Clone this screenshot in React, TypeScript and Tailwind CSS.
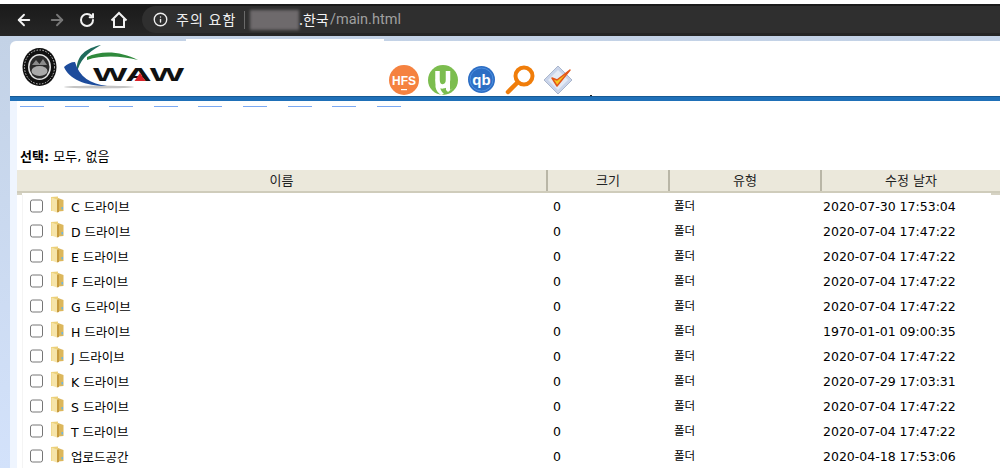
import { ArrowLeft, ArrowRight, Info, RotateCw } from "lucide-react";

const rows = [
  { name: "C 드라이브", date: "2020-07-30 17:53:04" },
  { name: "D 드라이브", date: "2020-07-04 17:47:22" },
  { name: "E 드라이브", date: "2020-07-04 17:47:22" },
  { name: "F 드라이브", date: "2020-07-04 17:47:22" },
  { name: "G 드라이브", date: "2020-07-04 17:47:22" },
  { name: "H 드라이브", date: "1970-01-01 09:00:35" },
  { name: "J 드라이브", date: "2020-07-04 17:47:22" },
  { name: "K 드라이브", date: "2020-07-29 17:03:31" },
  { name: "S 드라이브", date: "2020-07-04 17:47:22" },
  { name: "T 드라이브", date: "2020-07-04 17:47:22" },
  { name: "업로드공간", date: "2020-04-18 17:53:06" },
];

const uiFont = "font-['DejaVu_Sans','Noto_Sans_CJK_KR',sans-serif]";

const FolderIcon = () => (
  <svg width="14" height="17" viewBox="0 0 14 17" className="shrink-0">
    <path d="M1 1 L8 0.5 L8 14.5 L1 15 Z" fill="#ecd07a" />
    <path d="M8 2 L13.5 4 L13.5 15 L8 15.5 Z" fill="#dcb75c" />
    <path d="M1.5 1.5 L7 3.5 L7 16.5 L1.5 14.5 Z" fill="#f6e4a8" />
    <path d="M7 3.5 L9 4 L9 16 L7 16.5 Z" fill="#c79b3e" />
    <rect x="11.5" y="11" width="1.5" height="2.5" fill="#6db5e0" />
  </svg>
);

const Seal = () => (
  <svg width="35" height="38" viewBox="0 0 35 38" className="shrink-0">
    <ellipse cx="17.5" cy="19" rx="17" ry="19" fill="#111" />
    <ellipse cx="17.5" cy="19" rx="15" ry="17" fill="none" stroke="#ccc" strokeWidth="1" strokeDasharray="1.5 1.5" />
    <ellipse cx="17.5" cy="19" rx="11.5" ry="13" fill="#e4e4e4" />
    <ellipse cx="17.5" cy="19" rx="10" ry="11.5" fill="#2a2a2a" />
    <ellipse cx="17.5" cy="23" rx="8" ry="5" fill="#aaa" />
    <path d="M10 17 L14 12 L17.5 16 L21 11 L25 17 Z" fill="#8a8a8a" />
  </svg>
);

const WawLogo = () => (
  <svg width="124" height="46" viewBox="0 0 124 46" className="shrink-0">
    <ellipse cx="36" cy="42" rx="35" ry="1.4" fill="#c4c4c4" />
    <path d="M38 0 C24 3 12 10 14 28 C16 16 24 8 38 0 Z" fill="#1f6b5c" />
    <path d="M24 12 C38 5 58 6 75 15 C58 11 40 10 24 15 Z" fill="#2f8a3c" />
    <path d="M1 22 C6 34 22 41 44 41 C28 39 16 32 12 17 C8 17 4 19 1 22 Z" fill="#1d4c9c" />
    <text
      x="75.5"
      y="36"
      textAnchor="middle"
      textLength="91"
      lengthAdjust="spacingAndGlyphs"
      fontFamily="Liberation Sans, sans-serif"
      fontWeight="700"
      fontSize="19"
      fill="#111"
    >
      WAW
    </text>
    <path d="M77 28 L82.5 36 L71.5 36 Z" fill="#d8232a" />
  </svg>
);

const HfsIcon = () => (
  <svg width="30" height="30" viewBox="0 0 30 30">
    <circle cx="15" cy="15" r="15" fill="#f58240" />
    <text x="15" y="20" textAnchor="middle" fontFamily="Liberation Sans, sans-serif" fontWeight="700" fontSize="12" fill="#fff">
      HFS
    </text>
    <rect x="12" y="24" width="6" height="1.2" fill="#fff" />
  </svg>
);

const TorrentIcon = () => (
  <svg width="30" height="30" viewBox="0 0 30 30">
    <circle cx="15" cy="15" r="15" fill="#7cbd4f" />
    <path d="M9.5 6 V15 C9.5 24 20 23 20 15 V6" fill="none" stroke="#fff" strokeWidth="4.5" />
    <path d="M7.5 14 L7.5 22 C8 25 10 28 13 30 L16 29 C13 26 12 24 12 20 Z" fill="#fff" />
    <path d="M18 14 H22 V25 L25 23 L20 27 L18 25 Z" fill="#fff" />
  </svg>
);

const QbIcon = () => (
  <svg width="27" height="27" viewBox="0 0 27 27">
    <circle cx="13.5" cy="13.5" r="13.5" fill="#2d6ec4" />
    <circle cx="13.5" cy="13.5" r="11.5" fill="none" stroke="#4d8fe0" strokeWidth="1" />
    <text x="13.5" y="18.5" textAnchor="middle" fontFamily="Liberation Sans, sans-serif" fontWeight="700" fontSize="15" fill="#fff">
      qb
    </text>
  </svg>
);

const SearchIcon = () => (
  <svg width="30" height="30" viewBox="0 0 30 30">
    <circle cx="19" cy="11" r="8.5" fill="#fff" stroke="#f07d0a" strokeWidth="4" />
    <path d="M12.5 17.5 L3 27" stroke="#f07d0a" strokeWidth="4.5" strokeLinecap="round" />
  </svg>
);

const CheckIcon = () => (
  <svg width="30" height="30" viewBox="0 0 30 30">
    <path d="M15 1 L29 15 L15 29 L1 15 Z" fill="#c9d4ea" stroke="#aab6cc" strokeWidth="1" />
    <path d="M15 5 L25 15 L15 25 L5 15 Z" fill="#e4eaf5" />
    <path d="M9 13 L14 21 L27 5 L14 15 Z" fill="#f6c61e" stroke="#e2561a" strokeWidth="1.5" strokeLinejoin="round" />
  </svg>
);

const Toolbar = () => (
  <div className="mt-1 h-8 pb-[1px] flex items-center bg-gradient-to-b from-[#1a1a1a] to-[#262626] text-white font-['Noto_Sans_CJK_KR','Noto_Sans',sans-serif]">
    <div className="w-[142px] flex items-center shrink-0">
      <ArrowLeft size={18} strokeWidth={2.5} className="ml-[15px]" color="#f2f2f2" />
      <ArrowRight size={18} strokeWidth={2.5} className="ml-[15px]" color="#777" />
      <RotateCw size={16} strokeWidth={3} className="ml-[13px]" color="#f2f2f2" />
      <svg width="18" height="18" viewBox="0 0 18 18" className="ml-[15px]">
        <path d="M1.5 9.5 L9 2 L16.5 9.5 M4 8 V16 H14 V8" fill="none" stroke="#f2f2f2" strokeWidth="2" />
      </svg>
    </div>
    <div className="flex-1 h-[27px] rounded-l-full bg-[#2f2f2f] flex items-center text-[14px]">
      <Info size={15} strokeWidth={2.2} className="ml-[11px]" color="#ededed" />
      <span className="ml-2 w-[60px] text-[#eeeeee] whitespace-nowrap tracking-[1.2px]">주의 요함</span>
      <div className="ml-2 w-px h-[18px] bg-[#6a6a6a]" />
      <div className="ml-[5px] w-[49px] h-5 bg-[#6e6a6c] blur-[1.5px]" />
      <span className="w-[31px] text-[#f4f4f4] whitespace-nowrap">.한국</span>
      <span className="text-[#a0a0a0] font-['Roboto',sans-serif] text-[14.5px] whitespace-nowrap">/main.html</span>
    </div>
  </div>
);

const Header = () => (
  <div className="flex h-[57px]">
    <div className="flex items-start pt-[7px] pl-[12px] w-[379px] shrink-0">
      <Seal />
      <div className="ml-[6px] -mt-[3px]">
        <WawLogo />
      </div>
    </div>
    <div className="flex items-center pt-[20px] h-full">
      <HfsIcon />
      <div className="ml-[9px]">
        <TorrentIcon />
      </div>
      <div className="ml-[10px]">
        <QbIcon />
      </div>
      <div className="ml-[10px]">
        <SearchIcon />
      </div>
      <div className="ml-2">
        <CheckIcon />
      </div>
    </div>
    <div className="self-end ml-[17px] mb-[2px] w-[2px] h-px bg-[#222]" />
  </div>
);

const Table = () => (
  <div className={`${uiFont} text-[12.5px] text-black`}>
    <div className="grid grid-cols-[531px_122px_152px_1fr] h-[23px] bg-[#ebe8db] border-b-2 border-[#cfccbb] text-[#222]">
      {["이름", "크기", "유형", "수정 날자"].map((label) => (
        <div key={label} className="flex items-center justify-center border-r-2 border-[#b9b6a6] last:border-r-0 text-[13px] leading-none">
          {label}
        </div>
      ))}
    </div>
    <div className="flex justify-between h-[2px]">
      <div className="w-[5px] bg-[#d6d3c4]" />
      <div className="w-[9px] bg-[#d6d3c4]" />
    </div>
    <div className="ml-[5px] border-l border-[#f4f4f4]">
      {rows.map((row) => (
        <div key={row.name} className="grid grid-cols-[524px_121px_149px_1fr] h-[25px] items-center">
          <div className="flex items-center">
            <input type="checkbox" className="ml-[7px] -mt-1 w-[13px] h-[14px] shrink-0" readOnly />
            <div className="ml-[7px] -mt-[6px]">
              <FolderIcon />
            </div>
            <span className="ml-[7px] mt-[2px] text-[12.5px] whitespace-nowrap">{row.name}</span>
          </div>
          <div className="pl-[6px]">0</div>
          <div className="pl-[6px] -mt-[2px] text-[11.5px]">폴더</div>
          <div className="pl-[6px] whitespace-nowrap">{row.date}</div>
        </div>
      ))}
    </div>
  </div>
);

export default function App() {
  return (
    <div className="w-[1000px] h-[468px] overflow-hidden bg-white">
      <Toolbar />
      <div className="flex h-[432px] bg-gradient-to-b from-[#c3d2e6] to-[#d3e2fb]">
        <div className="w-[10px] shrink-0" />
        <div className="flex-1 mt-[5px] rounded-tl-[6px] bg-white">
          <div className="h-[2px] -mt-[2px] ml-[176px] w-[198px] bg-white" />
          <Header />
          <div className="mt-[-2px] h-[5px] bg-[#1f70b8] border-t border-[#175a94]" />
          <div className="flex">
            <div className="w-[7px] bg-[#eff5fe] shrink-0" />
            <div className="flex-1 min-w-0">
              <div className="flex h-[14px] pl-[3px] gap-[20.6px] pt-[5px]">
                {[0, 1, 2, 3, 4, 5, 6, 7, 8].map((i) => (
                  <div key={i} className="w-[24px] h-px bg-[#7ba9f2]" />
                ))}
              </div>
              <div className={`${uiFont} h-[55px] pt-[33px] pl-[3px] text-[13px] leading-[18px] text-black`}>
                <b>선택:</b> 모두, 없음
              </div>
              <Table />
            </div>
          </div>
        </div>
      </div>
    </div>
  );
}
